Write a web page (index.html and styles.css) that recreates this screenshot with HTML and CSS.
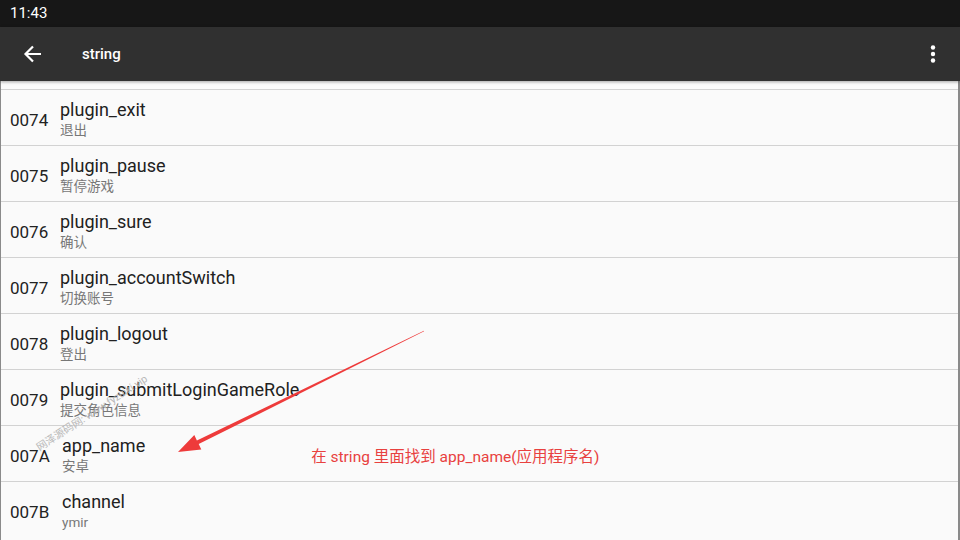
FILE: index.html
```html
<!DOCTYPE html>
<html lang="zh">

<head>
    <meta charset="UTF-8">
    <title>string</title>
    <link rel="stylesheet" href="styles.css">
</head>

<body>
    <div class="statusbar">11:43</div>
    <div class="toolbar">
        <svg class="back" width="20" height="20" viewBox="0 0 20 20">
            <path d="M18 10H3M10 2.5L2.5 10 10 17.5" fill="none" stroke="#fff" stroke-width="2.2" />
        </svg>
        <div class="title">string</div>
        <svg class="more" width="6" height="18" viewBox="0 0 6 18">
            <circle cx="3" cy="2.5" r="2.2" fill="#fff" />
            <circle cx="3" cy="9" r="2.2" fill="#fff" />
            <circle cx="3" cy="15.5" r="2.2" fill="#fff" />
        </svg>
    </div>
    <div class="list">
        <div class="cut"></div>
        <div class="row">
            <div class="code">0074</div>
            <div class="txt">
                <div class="name">plugin_exit</div>
                <div class="val">退出</div>
            </div>
        </div>
        <div class="row">
            <div class="code">0075</div>
            <div class="txt">
                <div class="name">plugin_pause</div>
                <div class="val">暂停游戏</div>
            </div>
        </div>
        <div class="row">
            <div class="code">0076</div>
            <div class="txt">
                <div class="name">plugin_sure</div>
                <div class="val">确认</div>
            </div>
        </div>
        <div class="row">
            <div class="code">0077</div>
            <div class="txt">
                <div class="name">plugin_accountSwitch</div>
                <div class="val">切换账号</div>
            </div>
        </div>
        <div class="row">
            <div class="code">0078</div>
            <div class="txt">
                <div class="name">plugin_logout</div>
                <div class="val">登出</div>
            </div>
        </div>
        <div class="row">
            <div class="code">0079</div>
            <div class="txt">
                <div class="name">plugin_submitLoginGameRole</div>
                <div class="val">提交角色信息</div>
            </div>
        </div>
        <div class="row">
            <div class="code wide">007A</div>
            <div class="txt">
                <div class="name">app_name</div>
                <div class="val">安卓</div>
            </div>
            <div class="note">在 string 里面找到 app_name(应用程序名)</div>
        </div>
        <div class="row last">
            <div class="code wide">007B</div>
            <div class="txt">
                <div class="name">channel</div>
                <div class="val">ymir</div>
            </div>
        </div>

        <div class="mark">网泽源码网: www.fyzuiki.vip</div>
        <svg class="arrow" width="960" height="540" viewBox="0 0 960 540">
            <polygon fill="#ee3b3b"
                points="178,452 194.3,435.1 196.9,440.5 423.9,330.7 424.1,331.3 198.7,444.1 201.3,449.5" />
        </svg>
    </div>
</body>

</html>
```

FILE: styles.css
```css
body {
    margin: 0;
    width: 960px;
    height: 540px;
    overflow: hidden;
    background-color: #fafafa;
    font-family: Roboto, "Noto Sans CJK SC", sans-serif;
}

.statusbar {
    height: 27px;
    background-color: #171717;
    color: #fff;
    font-size: 15px;
    line-height: 27px;
    padding-left: 10px;
}

.toolbar {
    height: 54px;
    background-color: #303030;
    display: flex;
    align-items: center;
    padding: 0 24px 0 23px;
    color: #fff;
    box-shadow: 0 1px 3px rgba(0, 0, 0, 0.35);
    position: relative;
    z-index: 1;
}

.title {
    margin-left: 39px;
    font-size: 15px;
    font-weight: 500;
    flex: 1;
}

.list {
    height: 459px;
    border-left: 1px solid #8a8a8a;
    border-right: 2px solid #8a8a8a;
    border-bottom: 2px solid #8a8a8a;
}

.cut {
    height: 8px;
    border-bottom: 1px solid #d2d2d2;
}

.row {
    height: 55px;
    border-bottom: 1px solid #d2d2d2;
    display: flex;
    align-items: center;
    padding-left: 9px;
}

.row.last {
    border-bottom: none;
}

.code {
    font-size: 17px;
    color: #222;
    width: 41px;
    margin-right: 9px;
    padding-top: 4px;
}

.code.wide {
    width: 43px;
}

.txt {
    padding-top: 3px;
}

.name {
    font-size: 18px;
    line-height: 22px;
    color: #212121;
}

.val {
    font-size: 13.5px;
    line-height: 18px;
    color: #777;
}

.note {
    margin-left: 166px;
    margin-top: 3px;
    font-size: 15.5px;
    color: #e8413f;
}

.mark {
    position: absolute;
    left: 37px;
    top: 440px;
    font-size: 10.5px;
    color: #b8b8b8;
    transform: rotate(-33deg);
    transform-origin: left center;
}

.arrow {
    position: absolute;
    left: 0;
    top: 0;
    pointer-events: none;
}
```
